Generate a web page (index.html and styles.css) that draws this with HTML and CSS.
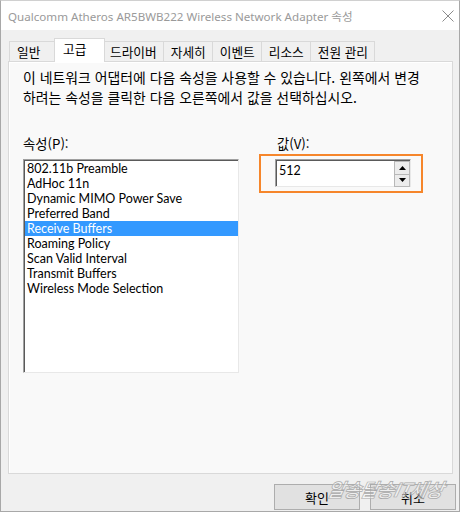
FILE: index.html
```html
<!DOCTYPE html>
<html lang="ko">
<head>
<meta charset="utf-8">
<link rel="stylesheet" href="styles.css">
</head>
<body>
<div class="window">
  <div class="titlebar">
    <span class="title">Qualcomm Atheros AR5BWB222 Wireless Network Adapter 속성</span>
    <svg class="close" width="12" height="12" viewBox="0 0 12 12"><path d="M0.5 0.5L11.5 11.5M11.5 0.5L0.5 11.5" stroke="#8a8a8a" stroke-width="1" fill="none"/></svg>
  </div>
  <div class="body">
    <div class="tabs">
      <div class="tab first">일반</div>
      <div class="tab active">고급</div>
      <div class="tab">드라이버</div>
      <div class="tab">자세히</div>
      <div class="tab">이벤트</div>
      <div class="tab">리소스</div>
      <div class="tab">전원 관리</div>
    </div>
    <div class="panel">
      <p class="desc">이 네트워크 어댑터에 다음 속성을 사용할 수 있습니다. 왼쪽에서 변경<br>하려는 속성을 클릭한 다음 오른쪽에서 값을 선택하십시오.</p>
      <div class="columns">
        <div class="col-left">
          <div class="label">속성(P):</div>
          <ul class="list">
            <li>802.11b Preamble</li>
            <li>AdHoc 11n</li>
            <li>Dynamic MIMO Power Save</li>
            <li>Preferred Band</li>
            <li class="selected">Receive Buffers</li>
            <li>Roaming Policy</li>
            <li>Scan Valid Interval</li>
            <li>Transmit Buffers</li>
            <li>Wireless Mode Selection</li>
          </ul>
        </div>
        <div class="col-right">
          <div class="label value-label">값(V):</div>
          <div class="mark">
            <div class="edit">
              <span class="edit-text">512</span>
              <div class="spin">
                <div class="spin-btn"><svg width="7" height="4" viewBox="0 0 7 4"><path d="M3.5 0L7 4H0Z" fill="#000"/></svg></div>
                <div class="spin-btn"><svg width="7" height="4" viewBox="0 0 7 4"><path d="M0 0H7L3.5 4Z" fill="#000"/></svg></div>
              </div>
            </div>
          </div>
        </div>
      </div>
    </div>
    <div class="buttons">
      <button class="btn">확인</button>
      <button class="btn">취소</button>
    </div>
  </div>
  <div class="watermark">알송달송IT세상</div>
</div>
</body>
</html>
```
FILE: styles.css
```css
* { box-sizing: border-box; }
html, body { margin: 0; padding: 0; }
body {
  font-family: "Lato", "Noto Sans CJK KR", sans-serif;
  font-size: 12px;
  color: #000;
  background: #fff;
}
.window {
  position: relative;
  width: 460px;
  height: 512px;
  border: 1px solid #a8a8a8;
  border-top-color: #d0d0d0;
  display: flex;
  flex-direction: column;
  background: #f0f0f0;
}
.titlebar {
  height: 29px;
  background: #fff;
  display: flex;
  align-items: center;
  justify-content: space-between;
  padding: 0 5px 0 7px;
}
.title {
  color: #9a9a9a;
  font-size: 11.6px;
  font-family: "Noto Sans", "Noto Sans CJK KR", sans-serif;
}
.body {
  flex: 1;
  display: flex;
  flex-direction: column;
  padding: 7px 6px 0 7px;
}
.tabs {
  display: flex;
  align-items: flex-end;
  height: 24px;
  padding-left: 1px;
}
.tab {
  height: 20px;
  min-width: 47px;
  padding: 0 6px 0 7px;
  border: 1px solid #d9d9d9;
  border-bottom: none;
  border-left: none;
  background: #f0f0f0;
  font-family: "Noto Sans CJK KR", sans-serif;
  font-size: 12.7px;
  line-height: 19px;
  white-space: nowrap;
}
.tab.first { border-left: 1px solid #d9d9d9; }
.tab.active {
  height: 24px;
  background: #fff;
  margin: 0 -2px -1px -2px;
  padding: 0 8px 0 8px;
  min-width: 51px;
  border-left: 1px solid #d9d9d9;
  line-height: 20px;
  position: relative;
  z-index: 1;
}
.panel {
  height: 413px;
  border: 1px solid #d9d9d9;
  background: #f9f9f9;
  box-shadow: inset 1px 1px 0 #fff;
  padding: 5px 14px 0 14px;
}
.desc {
  margin: 0;
  font-family: "Noto Sans CJK KR", sans-serif;
  font-size: 13.9px;
  line-height: 20px;
  white-space: nowrap;
}
.columns {
  display: flex;
  margin-top: 28px;
}
.label {
  font-family: "Noto Sans CJK KR", sans-serif;
  font-size: 13.3px;
  line-height: 18px;
  margin-bottom: 6px;
}
.col-left { width: 216px; }
.col-right { margin-left: 36px; width: 136px; }
.value-label { padding-left: 2px; }
.list {
  list-style: none;
  margin: 0;
  padding: 1px 0 0 0;
  height: 214px;
  background: #fff;
  border: 1px solid;
  border-color: #a0a0a0 #e8e8e8 #e8e8e8 #a0a0a0;
  box-shadow: inset 1px 1px 0 #5a5a5a;
}
.list li {
  height: 15px;
  line-height: 15px;
  font-size: 12.5px;
  padding-left: 2px;
  margin-left: 1px;
  white-space: nowrap;
}
.list li.selected {
  background: #3399ff;
  color: #fff;
}
.mark {
  margin: -5px -12px 0 -16px;
  padding: 3px 10px 4px 14px;
  border: 2px solid #f6862b;
}
.edit {
  height: 28px;
  background: #fff;
  border: 1px solid;
  border-color: #a0a0a0 #e8e8e8 #e8e8e8 #a0a0a0;
  box-shadow: inset 1px 1px 0 #5a5a5a;
  display: flex;
  justify-content: space-between;
  padding: 1px 0 0 3px;
}
.edit-text {
  line-height: 20px;
  font-size: 12.5px;
}
.spin {
  display: flex;
  flex-direction: column;
  width: 16px;
  height: 26px;
}
.spin-btn {
  flex: 1;
  background: #ececec;
  border: 1px solid #b8b8b8;
  display: flex;
  align-items: center;
  justify-content: center;
}
.spin-btn + .spin-btn { border-top: none; }
.buttons {
  display: flex;
  justify-content: flex-end;
  gap: 10px;
  margin-top: 10px;
  margin-right: -3px;
}
.btn {
  width: 86px;
  height: 26px;
  background: #e1e1e1;
  border: 1px solid #adadad;
  font-family: "Noto Sans CJK KR", sans-serif;
  font-size: 13px;
  color: #000;
  padding: 0;
}
.watermark {
  position: absolute;
  left: 327px;
  top: 474px;
  font-family: "Noto Sans CJK KR", sans-serif;
  font-size: 19px;
  font-weight: 700;
  font-style: italic;
  letter-spacing: -1px;
  color: rgba(255,255,255,0.45);
  -webkit-text-stroke: 0.7px #a9a9a9;
  transform: skewX(-12deg);
  pointer-events: none;
  z-index: 2;
}
```
